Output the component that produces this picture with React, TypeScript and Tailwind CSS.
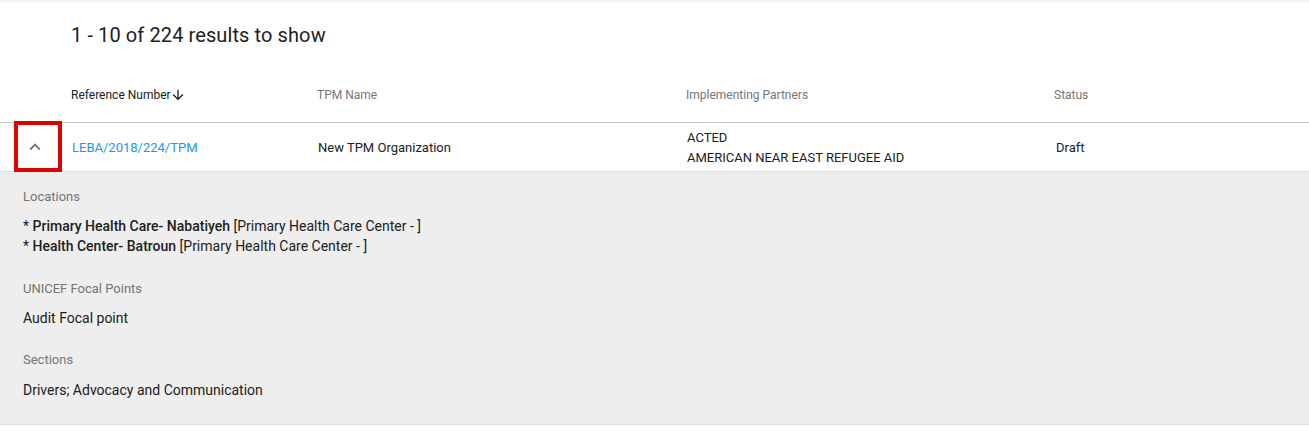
import React from 'react';

/* ── Engagements list: one expanded row ── */

const columns = [
  { label: 'Reference Number', width: 'w-[246px]', sorted: true },
  { label: 'TPM Name', width: 'w-[369px]' },
  { label: 'Implementing Partners', width: 'w-[368px]' },
  { label: 'Status', width: 'flex-1' },
];

function ArrowDown() {
  return (
    <svg width="16" height="16" viewBox="0 0 24 24" className="-ml-px">
      <path d="M20 12l-1.41-1.41L13 16.17V4h-2v12.17l-5.58-5.59L4 12l8 8 8-8z" fill="#212121" />
    </svg>
  );
}

function ChevronUp() {
  return (
    <svg width="22" height="22" viewBox="0 0 24 24">
      <path d="M7.41 15.41L12 10.83l4.59 4.58L18 14l-6-6-6 6z" fill="#757575" />
    </svg>
  );
}

function DetailBlock({
  title,
  children,
  className = '',
  bodyClass = 'mt-[11px]',
}: {
  title: string;
  children: React.ReactNode;
  className?: string;
  bodyClass?: string;
}) {
  return (
    <div className={`flex flex-col ${className}`}>
      <div className="text-[13px] text-[#757575] leading-[16px]">{title}</div>
      <div className={`${bodyClass} text-[14px] text-[#212121] leading-[20px]`}>{children}</div>
    </div>
  );
}

export default function App() {
  return (
    <div className="w-[1309px] h-[431px] bg-white font-['Roboto',sans-serif] overflow-hidden">
      <div className="h-[3px] bg-[#f5f5f5]" />

      <div className="h-[68px] pl-[71px] flex items-center">
        <h1 className="text-[20px] text-[#212121] leading-[24px] -mt-[5px] tracking-[0.1px]">1 - 10 of 224 results to show</h1>
      </div>

      {/* header */}
      <div className="h-[52px] flex items-center pl-[71px] pb-[4px] border-b border-[#c8c8c8]">
        {columns.map((c) => (
          <div key={c.label} className={`${c.width} flex items-center text-[12px] leading-[16px] ${c.sorted ? 'text-[#212121]' : 'text-[#757575]'}`}>
            {c.label}
            {c.sorted && <ArrowDown />}
          </div>
        ))}
      </div>

      {/* row */}
      <div className="relative h-[49px] flex items-center pl-[14px] pt-[2px] border-b border-[#e0e0e0] text-[13px] text-[#212121]">
        <div className="w-[58px] h-full flex items-center pl-[10px] -mt-[2px]">
          <ChevronUp />
        </div>
        <div className="absolute left-[14px] -top-[2px] w-[48px] h-[51px] border-4 border-[#e00000]" />
        <div className="w-[246px] text-[#2196f3]">LEBA/2018/224/TPM</div>
        <div className="w-[369px]">New TPM Organization</div>
        <div className="w-[368px] flex flex-col leading-[20px]">
          <span>ACTED</span>
          <span>AMERICAN NEAR EAST REFUGEE AID</span>
        </div>
        <div className="flex-1 pl-px">Draft</div>
      </div>

      {/* details */}
      <div className="h-[253px] bg-[#eeeeee] border-b border-[#e0e0e0] pl-[23px] pt-[17px] flex flex-col">
        <DetailBlock title="Locations">
          <div>
            * <span className="font-medium">Primary Health Care- Nabatiyeh</span> [Primary Health Care Center - ]
          </div>
          <div>
            * <span className="font-medium">Health Center- Batroun</span> [Primary Health Care Center - ]
          </div>
        </DetailBlock>
        <DetailBlock title="UNICEF Focal Points" className="mt-[25px]">Audit Focal point</DetailBlock>
        <DetailBlock title="Sections" className="mt-[24px]" bodyClass="mt-[12px]">
          Drivers; Advocacy and Communication
        </DetailBlock>
      </div>
    </div>
  );
}
